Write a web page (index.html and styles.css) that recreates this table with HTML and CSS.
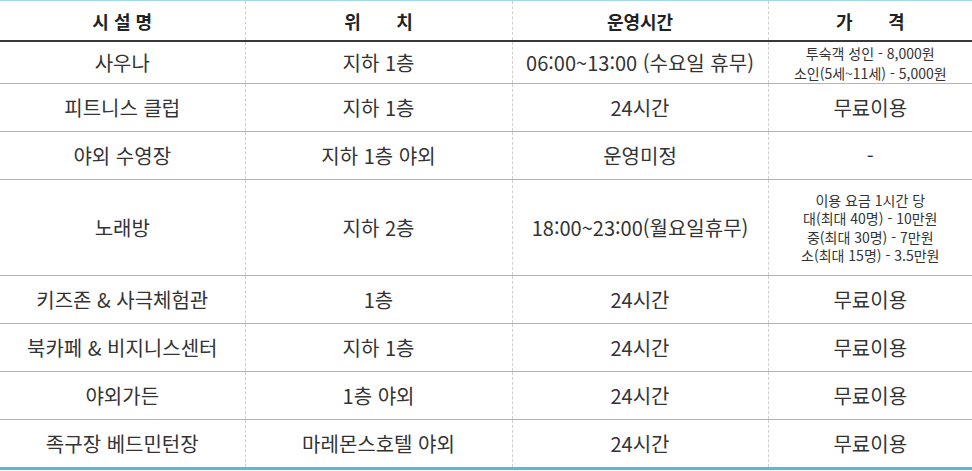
FILE: index.html
```html
<!DOCTYPE html>
<html lang="ko">
<head>
<meta charset="utf-8">
<title>부대시설</title>
<link rel="stylesheet" href="styles.css">
</head>
<body>
<table class="facility">
  <colgroup>
    <col class="c1"><col class="c2"><col class="c3"><col class="c4">
  </colgroup>
  <thead>
    <tr>
      <th>시 설 명</th>
      <th>위&nbsp;&nbsp;&nbsp;&nbsp;&nbsp;&nbsp;&nbsp;치</th>
      <th>운영시간</th>
      <th>가&nbsp;&nbsp;&nbsp;&nbsp;&nbsp;&nbsp;&nbsp;격</th>
    </tr>
  </thead>
  <tbody>
    <tr class="r-short">
      <td>사우나</td>
      <td>지하 1층</td>
      <td>06:00~13:00 (수요일 휴무)</td>
      <td class="small">투숙객 성인 - 8,000원<br>소인(5세~11세) - 5,000원</td>
    </tr>
    <tr>
      <td>피트니스 클럽</td>
      <td>지하 1층</td>
      <td>24시간</td>
      <td>무료이용</td>
    </tr>
    <tr>
      <td>야외 수영장</td>
      <td>지하 1층 야외</td>
      <td>운영미정</td>
      <td>-</td>
    </tr>
    <tr class="r-tall">
      <td>노래방</td>
      <td>지하 2층</td>
      <td>18:00~23:00(월요일휴무)</td>
      <td class="small tall">이용 요금 1시간 당<br>대(최대 40명) - 10만원<br>중(최대 30명) - 7만원<br>소(최대 15명) - 3.5만원</td>
    </tr>
    <tr>
      <td>키즈존 &amp; 사극체험관</td>
      <td>1층</td>
      <td>24시간</td>
      <td>무료이용</td>
    </tr>
    <tr>
      <td>북카페 &amp; 비지니스센터</td>
      <td>지하 1층</td>
      <td>24시간</td>
      <td>무료이용</td>
    </tr>
    <tr>
      <td>야외가든</td>
      <td>1층 야외</td>
      <td>24시간</td>
      <td>무료이용</td>
    </tr>
    <tr class="last">
      <td>족구장 베드민턴장</td>
      <td>마레몬스호텔 야외</td>
      <td>24시간</td>
      <td>무료이용</td>
    </tr>
  </tbody>
</table>
</body>
</html>
```
FILE: styles.css
```css
html, body {
  margin: 0;
  padding: 0;
  background: #fff;
}
.facility {
  width: 972px;
  border-collapse: collapse;
  table-layout: fixed;
  font-family: "Noto Sans CJK KR", "Noto Sans", sans-serif;
  color: #333;
  border-top: 1px solid #a3d8ee;
  border-bottom: 3px solid #5cb7dd;
}
.c1 { width: 245px; }
.c2 { width: 267px; }
.c3 { width: 256px; }
.c4 { width: 204px; }

.facility th,
.facility td {
  padding: 0;
  text-align: center;
  vertical-align: middle;
  border-left: 1px dashed #cfcfcf;
}
.facility th:first-child,
.facility td:first-child {
  border-left: none;
}
.facility th {
  height: 39px;
  font-size: 18px;
  font-weight: bold;
  color: #222;
  border-bottom: 2px solid #383838;
}
.facility td {
  height: 47px;
  font-size: 20px;
  line-height: 26px;
  border-bottom: 1px solid #b4b4b4;
}
.facility tr.r-short td {
  height: 41px;
}
.facility tr.r-tall td {
  height: 95px;
}
.facility tr.last td {
  border-bottom: none;
  height: 47px;
}
.facility td.small {
  font-size: 14px;
  line-height: 20px;
}
.facility td.small.tall {
  line-height: 18.5px;
}
```
